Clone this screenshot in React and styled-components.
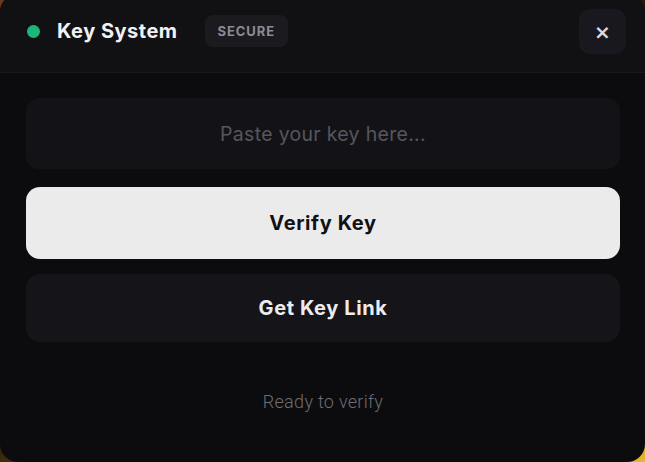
import React from 'react'
import styled, { createGlobalStyle } from 'styled-components'

const GlobalStyle = createGlobalStyle`
    html, body {
        margin: 0;
        padding: 0;
        height: 100%;
        overflow: hidden;
        background: linear-gradient(160deg, #6b3a1a 0%, #2a1a0c 30%, #1a1408 60%, #e8b62e 100%);
    }
    * {
        box-sizing: border-box;
    }
`

const Window = styled.div`
    width: 645px;
    height: 468px;
    margin-top: -6px;
    background: #0c0c0f;
    border-radius: 18px;
    overflow: hidden;
    display: flex;
    flex-direction: column;
    font-family: Inter, "Open Sans", sans-serif;
`

const Header = styled.div`
    height: 79px;
    padding: 21px 19px 0 27px;
    display: flex;
    align-items: flex-start;
    background: #111114;
    border-bottom: 1px solid #1a1a1e;
`

const Title = styled.div`
    display: flex;
    align-items: center;
    height: 32px;
    flex-grow: 1;
`

const Dot = styled.span`
    width: 13px;
    height: 13px;
    border-radius: 50%;
    background: #1db57a;
    margin-right: 17px;
`

const Heading = styled.h1`
    margin: 0 27px 0 0;
    font-size: 20px;
    font-weight: 700;
    color: #f1f1f3;
    letter-spacing: 0.5px;
`

const Badge = styled.span`
    height: 32px;
    padding: 0 13px;
    display: flex;
    align-items: center;
    background: #1a1a1f;
    border-radius: 8px;
    color: #8c8c95;
    font-size: 13px;
    font-weight: 700;
    letter-spacing: 0.9px;
`

const Close = styled.button`
    width: 47px;
    height: 45px;
    margin-top: -6px;
    border: none;
    border-radius: 11px;
    background: #18181e;
    color: #d9d9de;
    font-size: 20px;
    font-weight: 700;
    display: flex;
    align-items: center;
    justify-content: center;
    font-family: "DejaVu Sans", sans-serif;
`

const Body = styled.div`
    padding: 25px 25px 0 26px;
    display: flex;
    flex-direction: column;
`

const KeyInput = styled.input`
    height: 71px;
    margin-bottom: 18px;
    border: none;
    border-radius: 13px;
    background: #131317;
    text-align: center;
    font-family: inherit;
    font-size: 19.5px;
    color: #ddd;
    outline: none;

    &::placeholder {
        color: #56565d;
        letter-spacing: 0.3px;
    }
`

const Button = styled.button`
    height: ${p => p.$primary ? '72px' : '68px'};
    margin-bottom: ${p => p.$primary ? '15px' : '0'};
    border: none;
    border-radius: 14px;
    background: ${p => p.$primary ? '#ebebeb' : '#151519'};
    color: ${p => p.$primary ? '#111114' : '#ececef'};
    font-family: inherit;
    font-size: 20px;
    font-weight: 700;
    letter-spacing: 0.6px;
`

const Status = styled.p`
    margin: 49px 0 0;
    text-align: center;
    font-family: Roboto, sans-serif;
    font-weight: 300;
    font-size: 18px;
    letter-spacing: 0.3px;
    color: #6d6d73;
`

const App = () => {
    return (
        <>
            <GlobalStyle />
            <Window>
                <Header>
                    <Title>
                        <Dot />
                        <Heading>Key System</Heading>
                        <Badge>SECURE</Badge>
                    </Title>
                    <Close>×</Close>
                </Header>
                <Body>
                    <KeyInput placeholder='Paste your key here...' />
                    <Button $primary>Verify Key</Button>
                    <Button>Get Key Link</Button>
                    <Status>Ready to verify</Status>
                </Body>
            </Window>
        </>
    )
}

export default App
